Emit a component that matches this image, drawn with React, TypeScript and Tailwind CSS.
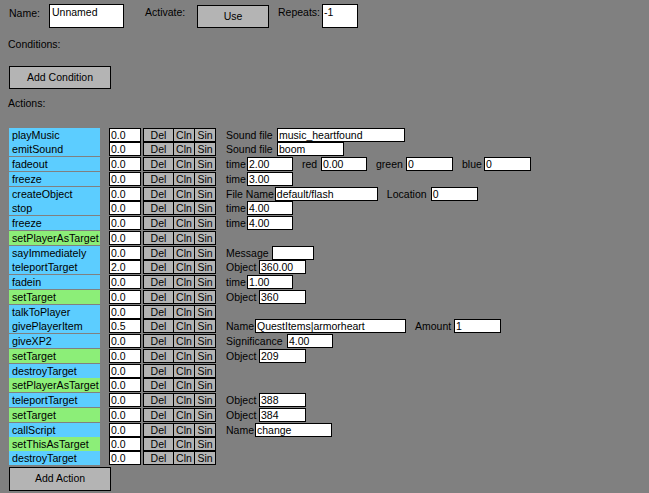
import React from "react";

type Field = { label: string; value: string; w: number };

type ActionRow = {
  name: string;
  green?: boolean;
  num: string;
  gap: boolean;
  fields: Field[];
};

// label column widths measured from the reference (label start -> input start)
const labelW: Record<string, number> = {
  "Sound file": 51,
  time: 21,
  red: 19,
  green: 30,
  blue: 22,
  "File Name": 47,
  Location: 44,
  Message: 46,
  Object: 33,
  Name: 29,
  Amount: 39,
  Significance: 61,
};

const rows: ActionRow[] = [
  { name: "playMusic", num: "0.0", gap: false, fields: [{ label: "Sound file", value: "music_heartfound", w: 128 }] },
  { name: "emitSound", num: "0.0", gap: true, fields: [{ label: "Sound file", value: "boom", w: 67 }] },
  {
    name: "fadeout",
    num: "0.0",
    gap: true,
    fields: [
      { label: "time", value: "2.00", w: 46 },
      { label: "red", value: "0.00", w: 46 },
      { label: "green", value: "0", w: 47 },
      { label: "blue", value: "0", w: 47 },
    ],
  },
  { name: "freeze", num: "0.0", gap: true, fields: [{ label: "time", value: "3.00", w: 46 }] },
  {
    name: "createObject",
    num: "0.0",
    gap: false,
    fields: [
      { label: "File Name", value: "default/flash", w: 103 },
      { label: "Location", value: "0", w: 47 },
    ],
  },
  { name: "stop", num: "0.0", gap: true, fields: [{ label: "time", value: "4.00", w: 46 }] },
  { name: "freeze", num: "0.0", gap: true, fields: [{ label: "time", value: "4.00", w: 46 }] },
  { name: "setPlayerAsTarget", green: true, num: "0.0", gap: true, fields: [] },
  { name: "sayImmediately", num: "0.0", gap: false, fields: [{ label: "Message", value: "", w: 42 }] },
  { name: "teleportTarget", num: "2.0", gap: true, fields: [{ label: "Object", value: "360.00", w: 47 }] },
  { name: "fadein", num: "0.0", gap: true, fields: [{ label: "time", value: "1.00", w: 46 }] },
  { name: "setTarget", green: true, num: "0.0", gap: true, fields: [{ label: "Object", value: "360", w: 47 }] },
  { name: "talkToPlayer", num: "0.0", gap: false, fields: [] },
  {
    name: "givePlayerItem",
    num: "0.5",
    gap: true,
    fields: [
      { label: "Name", value: "QuestItems|armorheart", w: 151 },
      { label: "Amount", value: "1", w: 47 },
    ],
  },
  { name: "giveXP2", num: "0.0", gap: true, fields: [{ label: "Significance", value: "4.00", w: 46 }] },
  { name: "setTarget", green: true, num: "0.0", gap: true, fields: [{ label: "Object", value: "209", w: 47 }] },
  { name: "destroyTarget", num: "0.0", gap: false, fields: [] },
  { name: "setPlayerAsTarget", green: true, num: "0.0", gap: true, fields: [] },
  { name: "teleportTarget", num: "0.0", gap: true, fields: [{ label: "Object", value: "388", w: 47 }] },
  { name: "setTarget", green: true, num: "0.0", gap: true, fields: [{ label: "Object", value: "384", w: 47 }] },
  { name: "callScript", num: "0.0", gap: false, fields: [{ label: "Name", value: "change", w: 77 }] },
  { name: "setThisAsTarget", green: true, num: "0.0", gap: false, fields: [] },
  { name: "destroyTarget", num: "0.0", gap: false, fields: [] },
];

const Box: React.FC<{ w: number; value: string }> = ({ w, value }) => (
  <div
    className="h-[14px] shrink-0 overflow-hidden whitespace-nowrap border border-black bg-white pl-px leading-[12px]"
    style={{ width: w }}
  >
    {value}
  </div>
);

const Row: React.FC<{ row: ActionRow }> = ({ row }) => (
  <div className={`flex items-start ${row.gap ? "h-[15px]" : "h-[14px]"}`}>
    <div
      className={`ml-[9px] h-[14px] w-[91px] shrink-0 whitespace-nowrap pl-[3px] text-[10.7px] leading-[14px] ${
        row.green ? "bg-[#8cee78]" : "bg-[#5ccdff]"
      }`}
    >
      {row.name}
    </div>
    <div className="ml-[9px] h-[14px] w-[32px] shrink-0 border border-black bg-white pl-px leading-[12px]">
      {row.num}
    </div>
    <div className="ml-[2px] flex h-[14px] shrink-0 border border-black bg-[#b4b4b4] leading-[12px]">
      <div className="w-[30px] border-r border-black text-center">Del</div>
      <div className="w-[21px] border-r border-black text-center">Cln</div>
      <div className="w-[20px] text-center">Sin</div>
    </div>
    <div className="ml-[10px] flex items-start">
      {row.fields.map((f, i) => (
        <div key={i} className={`flex items-start ${i > 0 ? "ml-[9px]" : ""}`}>
          <span
            className="box-border shrink-0 whitespace-nowrap pr-px leading-[14px]"
            style={{ minWidth: labelW[f.label] }}
          >
            {f.label}
          </span>
          <Box w={f.w} value={f.value} />
        </div>
      ))}
    </div>
  </div>
);

export default function App() {
  return (
    <div className="h-[493px] w-[649px] overflow-hidden bg-[#808080] font-['Liberation_Sans',Arial,sans-serif] text-[10.5px] text-black">
      <div className="flex items-start pt-[4px]">
        <div className="ml-[9px] mt-[2px] w-[40px] leading-[14px]">Name:</div>
        <div className="h-[24px] w-[75px] border border-black bg-white pl-[2px] leading-[14px]">Unnamed</div>
        <div className="ml-[21px] mt-px w-[52px] leading-[14px]">Activate:</div>
        <div className="mt-px flex h-[23px] w-[72px] items-center justify-center border border-black bg-[#b4b4b4]">
          Use
        </div>
        <div className="ml-[9px] mt-px w-[44px] leading-[14px]">Repeats:</div>
        <div className="h-[24px] w-[36px] border border-black bg-white pl-px leading-[14px]">-1</div>
      </div>
      <div className="ml-[8px] mt-[9px] leading-[14px]">Conditions:</div>
      <div className="ml-[9px] mt-[15px] flex h-[23px] w-[102px] items-center justify-center border border-black bg-[#b4b4b4]">
        Add Condition
      </div>
      <div className="ml-[8px] mt-[7px] leading-[14px]">Actions:</div>
      <div className="mt-[18px] flex flex-col">
        {rows.map((r, i) => (
          <Row key={i} row={r} />
        ))}
      </div>
      <div className="ml-[9px] mt-[2px] flex h-[24px] w-[102px] items-center justify-center border border-black bg-[#b4b4b4]">
        Add Action
      </div>
    </div>
  );
}
